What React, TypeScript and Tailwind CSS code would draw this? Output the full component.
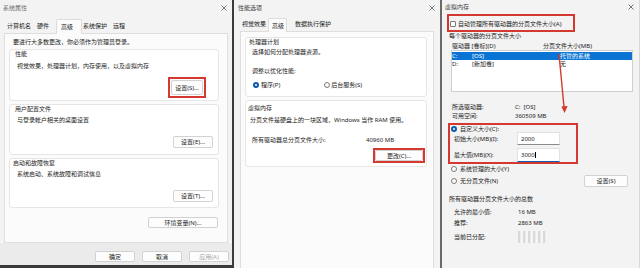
import React from "react";

function CloseX() {
  return (
    <svg width="6" height="6" viewBox="0 0 6 6" className="shrink-0">
      <path d="M0.5 0.5 L5.5 5.5 M5.5 0.5 L0.5 5.5" stroke="#555" strokeWidth="0.8" />
    </svg>
  );
}

function Radio({ on }: { on?: boolean }) {
  return on ? (
    <span className="w-[6px] h-[6px] rounded-full bg-[#0b5cad] flex items-center justify-center shrink-0">
      <span className="w-[2px] h-[2px] rounded-full bg-white" />
    </span>
  ) : (
    <span className="w-[6px] h-[6px] rounded-full border border-[#7a7a7a] bg-white shrink-0" />
  );
}

function Btn({ className, children, disabled }: { className: string; children: React.ReactNode; disabled?: boolean }) {
  return (
    <div
      className={
        "flex items-center justify-center bg-[#fdfdfd] border border-[#d2d2d2] rounded-[2px] shrink-0 " +
        (disabled ? "text-[#a6a6a6] " : "text-[#1b1b1b] ") +
        className
      }
    >
      {children}
    </div>
  );
}

function Panel1() {
  return (
    <div className="w-[232px] h-full flex flex-col bg-[#f3f3f3] shrink-0">
      <div className="h-[15px] shrink-0 flex items-center justify-between pl-[3px] pr-[5px]">
        <span className="text-[#6e6e6e]">系统属性</span>
        <CloseX />
      </div>
      <div className="h-[18px] shrink-0 flex items-end pl-[3px]">
        <div className="h-[15px] w-[30px] pl-[4px] flex items-center">计算机名</div>
        <div className="h-[15px] w-[23px] pl-[4px] flex items-center">硬件</div>
        <div className="h-[15px] w-[26px] pl-[4px] flex items-center bg-[#fbfbfb] border border-b-0 border-[#dcdcdc] rounded-t-[2px] relative z-10 -mb-px">高级</div>
        <div className="h-[15px] w-[30px] pl-[1px] flex items-center">系统保护</div>
        <div className="h-[15px] pl-[1px] flex items-center">远程</div>
      </div>
      <div className="h-[210px] shrink-0 ml-[4px] w-[224px] border border-[#dedede] bg-[#fbfbfb] flex flex-col">
        <div className="ml-[8px] mt-[4px]">要进行大多数更改，你必须作为管理员登录。</div>
        <div className="ml-[4px] w-[210px] mt-[3px] h-[52px] border border-[#e6e6e6] bg-white rounded-[3px] flex flex-col">
          <div className="pl-[5px]">性能</div>
          <div className="ml-[7px] mt-[4px]">视觉效果，处理器计划，内存使用，以及虚拟内存</div>
          <div className="mt-[7px] flex justify-end pr-[12px]">
            <div className="border-2 border-[#d3392f] p-[1px] w-[38px] h-[21px] flex">
              <Btn className="w-full h-full">设置(S)...</Btn>
            </div>
          </div>
        </div>
        <div className="ml-[4px] w-[210px] mt-[3px] h-[51px] border border-[#e6e6e6] bg-white rounded-[3px] flex flex-col">
          <div className="pl-[5px]">用户配置文件</div>
          <div className="ml-[7px] mt-[3px]">与登录帐户相关的桌面设置</div>
          <div className="mt-[12px] flex justify-end pr-[5px]">
            <Btn className="w-[40px] h-[12px]">设置(E)...</Btn>
          </div>
        </div>
        <div className="ml-[4px] w-[210px] mt-[3px] h-[50px] border border-[#e6e6e6] bg-white rounded-[3px] flex flex-col">
          <div className="pl-[3px]">启动和故障恢复</div>
          <div className="ml-[7px] mt-[3px]">系统启动、系统故障和调试信息</div>
          <div className="mt-[12px] flex justify-end pr-[5px]">
            <Btn className="w-[40px] h-[12px]">设置(T)...</Btn>
          </div>
        </div>
        <div className="mt-[9px] flex justify-end pr-[9px]">
          <Btn className="w-[70px] h-[11px]">环境变量(N)...</Btn>
        </div>
      </div>
      <div className="h-[22px] shrink-0 bg-[#ebebeb] flex justify-end items-start pt-[8px] pr-[3px] gap-[7px]">
        <Btn className="w-[40px] h-[11px]">确定</Btn>
        <Btn className="w-[40px] h-[11px]">取消</Btn>
        <Btn className="w-[40px] h-[11px]" disabled>应用(A)</Btn>
      </div>
      <div className="h-[3px] shrink-0 bg-[#3a3a3a]" />
    </div>
  );
}

function Panel2() {
  return (
    <div className="w-[206px] h-full flex flex-col bg-[#f3f3f3] shrink-0">
      <div className="h-[15px] shrink-0 flex items-center justify-between pl-[4px] pr-[5px]">
        <span className="text-[#3a3a3a]">性能选项</span>
        <CloseX />
      </div>
      <div className="h-[16px] shrink-0 flex items-end pl-[4px]">
        <div className="h-[14px] w-[30px] pl-[4px] flex items-center">视觉效果</div>
        <div className="h-[14px] w-[19px] pl-[3px] flex items-center bg-[#fbfbfb] border border-b-0 border-[#dcdcdc] rounded-t-[2px] relative z-10 -mb-px">高级</div>
        <div className="h-[14px] pl-[8px] flex items-center">数据执行保护</div>
      </div>
      <div className="flex-1 ml-[6px] w-[194px] border border-b-0 border-[#dedede] bg-[#fbfbfb] flex flex-col">
        <div className="ml-[4px] w-[182px] mt-[5px] h-[60px] border border-[#e6e6e6] bg-white rounded-[3px] flex flex-col">
          <div className="pl-[3px]">处理器计划</div>
          <div className="ml-[6px] mt-[2px]">选择如何分配处理器资源。</div>
          <div className="ml-[6px] mt-[11px]">调整以优化性能:</div>
          <div className="mt-[6px] flex items-center h-[8px]">
            <div className="ml-[7px] flex items-center gap-[2px]">
              <Radio on />
              <span>程序(P)</span>
            </div>
            <div className="ml-[44px] flex items-center gap-[1px]">
              <Radio />
              <span>后台服务(S)</span>
            </div>
          </div>
        </div>
        <div className="ml-[4px] w-[182px] mt-[3px] h-[67px] border border-[#e6e6e6] bg-white rounded-[3px] flex flex-col">
          <div className="pl-[2px] mt-[3px]">虚拟内存</div>
          <div className="ml-[4px] mt-[4px]">分页文件是硬盘上的一块区域，Windows 当作 RAM 使用。</div>
          <div className="ml-[6px] mt-[12px] flex">
            <span className="w-[114px]">所有驱动器总分页文件大小:</span>
            <span>40960 MB</span>
          </div>
          <div className="mt-[4px] flex justify-end pr-[1px]">
            <div className="border-2 border-[#d3392f] w-[52px] h-[15px] flex">
              <Btn className="w-full h-full">更改(C)...</Btn>
            </div>
          </div>
        </div>
      </div>
    </div>
  );
}

function Panel3() {
  return (
    <div className="flex-1 h-full flex flex-col bg-[#f3f3f3] relative border-r border-[#d8d8d8]">
      <div className="h-[14px] shrink-0 flex items-center justify-between pl-[3px] pr-[5px]">
        <span className="text-[#3a3a3a]">虚拟内存</span>
        <CloseX />
      </div>
      <div className="ml-[5px] w-[128px] h-[18px] border-2 border-[#d3392f] flex items-center pl-[1px] pt-[1px] gap-[2px] shrink-0">
        <span className="w-[6px] h-[6px] border border-[#7a7a7a] bg-white rounded-[1px] shrink-0" />
        <span>自动管理所有驱动器的分页文件大小(A)</span>
      </div>
      <div className="ml-[7px]">每个驱动器的分页文件大小</div>
      <div className="ml-[10px] mt-[2px] flex">
        <span className="w-[91px]">驱动器 [卷标](D)</span>
        <span>分页文件大小(MB)</span>
      </div>
      <div className="ml-[9px] w-[182px] h-[42px] bg-white border border-[#cfcfcf] pt-[1px] shrink-0 flex flex-col">
        <div className="h-[8px] bg-[#0a74d4] text-white flex items-center">
          <span className="w-[20px]">C:</span>
          <span className="w-[88px]">[OS]</span>
          <span>托管的系统</span>
        </div>
        <div className="h-[8px] flex items-center">
          <span className="w-[20px]">D:</span>
          <span className="w-[88px]">[新加卷]</span>
          <span>无</span>
        </div>
      </div>
      <div className="ml-[10px] mt-[11px] flex">
        <span className="w-[63px]">所选驱动器:</span>
        <span>C:&nbsp;&nbsp;[OS]</span>
      </div>
      <div className="ml-[10px] mt-[1px] flex">
        <span className="w-[63px]">可用空间:</span>
        <span>360509 MB</span>
      </div>
      <div className="ml-[6px] mt-[3px] w-[130px] h-[41px] border-2 border-[#d3392f] flex flex-col shrink-0">
        <div className="h-[7px] flex items-center pl-[1px] gap-[3px]">
          <Radio on />
          <span>自定义大小(C):</span>
        </div>
        <div className="h-[13px] flex items-center pl-[4px]">
          <span className="w-[63px]">初始大小(MB)(I):</span>
          <div className="w-[43px] h-[13px] bg-white border border-[#e2e2e2] border-b-[#8a8a8a] flex items-center pl-[3px]">2000</div>
        </div>
        <div className="h-[14px] mt-[3px] flex items-center pl-[4px]">
          <span className="w-[63px]">最大值(MB)(X):</span>
          <div className="w-[43px] h-[14px] bg-white border border-[#e2e2e2] border-b-[#0a5fb4] flex items-center pl-[3px]">
            3000<span className="w-[0.5px] h-[6px] bg-black" />
          </div>
        </div>
      </div>
      <div className="ml-[9px] mt-[1px] flex items-center gap-[3px] h-[8px]">
        <Radio />
        <span>系统管理的大小(Y)</span>
      </div>
      <div className="ml-[9px] mt-[2px] h-[12px] flex items-center">
        <div className="flex items-center gap-[3px] w-[133px]">
          <Radio />
          <span>无分页文件(N)</span>
        </div>
        <Btn className="w-[44px] h-[12px]">设置(S)</Btn>
      </div>
      <div className="ml-[7px] mt-[8px]">所有驱动器分页文件大小的总数</div>
      <div className="ml-[12px] mt-[5px] flex">
        <span className="w-[64px]">允许的最小值:</span>
        <span>16 MB</span>
      </div>
      <div className="ml-[12px] mt-[3px] flex">
        <span className="w-[64px]">推荐:</span>
        <span>2863 MB</span>
      </div>
      <div className="ml-[12px] mt-[4px] flex items-center">
        <span className="w-[64px]">当前已分配:</span>
        <span className="w-[29px] h-[12px] bg-[repeating-linear-gradient(90deg,#d9d9d9_0_2px,#ececec_2px_3px,#f6f6f6_3px_5px)]" />
      </div>
      <svg className="absolute inset-0 pointer-events-none" width="198" height="268" viewBox="0 0 198 268">
        <line x1="117" y1="54" x2="122" y2="107" stroke="#d3392f" strokeWidth="1.4" />
        <polygon points="122.6,113 119.3,106.5 125.6,106" fill="#d3392f" />
      </svg>
    </div>
  );
}

export default function App() {
  return (
    <div className="w-[640px] h-[268px] flex overflow-hidden bg-[#f3f3f3] text-[6px] leading-[8px] text-[#1b1b1b] font-['Noto_Sans','Noto_Sans_CJK_SC',sans-serif] whitespace-nowrap">
      <Panel1 />
      <div className="w-[2px] h-full bg-[#3b3b3b] shrink-0" />
      <Panel2 />
      <div className="w-[2px] h-full bg-[#6a6a6a] shrink-0" />
      <Panel3 />
    </div>
  );
}
